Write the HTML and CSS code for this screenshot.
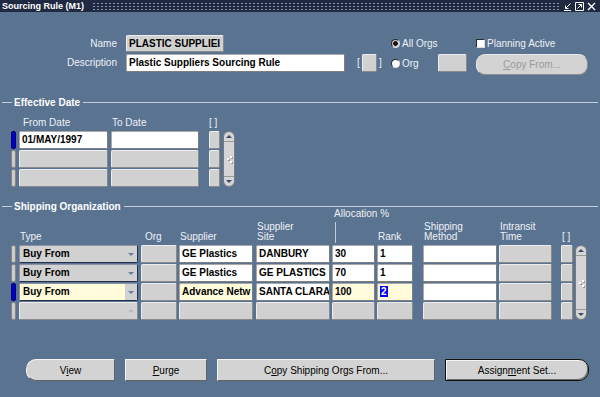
FILE: index.html
```html
<!DOCTYPE html>
<html>
<head>
    <title>Sourcing Rule (M1)</title>
    <link rel="stylesheet" href="styles.css">
</head>
<body>
<div class="window">
    <div class="titlebar">
        <span class="title">Sourcing Rule (M1)</span>
        <span class="dots"></span>
        <span class="wbtns">
            <svg width="9" height="9" viewBox="0 0 9 9"><path d="M7.5 1.5 L2.5 6.5 M2.5 3.5 V6.5 H5.5 M1 8.5 H8" stroke="#fff" fill="none"/></svg>
            <svg width="9" height="9" viewBox="0 0 9 9"><path d="M0.5 0.5 H8.5 V8.5 H0.5 Z M2.5 6.5 L6.5 2.5 M3.5 2.5 H6.5 V5.5" stroke="#fff" fill="none"/></svg>
            <svg width="9" height="9" viewBox="0 0 9 9"><path d="M1 1 L8 8 M8 1 L1 8" stroke="#fff" stroke-width="1.4"/></svg>
        </span>
    </div>

    <div class="content">
        <!-- header fields -->
        <div class="hdr">
            <div class="hrow">
                <span class="lbl">Name</span>
                <div class="fld grey w-name">PLASTIC SUPPLIEI</div>
                <span class="radio on all-orgs"><i></i>All Orgs</span>
                <span class="check"><i></i>Planning Active</span>
            </div>
            <div class="hrow">
                <span class="lbl">Description</span>
                <div class="fld w-desc">Plastic Suppliers Sourcing Rule</div>
                <span class="brk first">[</span>
                <div class="fld grey w-dff"></div>
                <span class="brk">]</span>
                <span class="radio org"><i></i>Org</span>
                <div class="fld grey w-orgcode"></div>
                <div class="btn copy-from"><span><u>C</u>opy From...</span></div>
            </div>
        </div>

        <!-- effective date -->
        <div class="section sec-eff"><span>Effective Date</span></div>
        <div class="eff-head">
            <span class="c-from">From Date</span>
            <span class="c-to">To Date</span>
            <span class="c-dff">[ ]</span>
        </div>
        <div class="grid eff">
            <div class="rows">
                <div class="row">
                    <i class="ind cur"></i>
                    <div class="fld e-from">01/MAY/1997</div>
                    <div class="fld e-to"></div>
                    <div class="fld grey e-dff"></div>
                </div>
                <div class="row">
                    <i class="ind"></i>
                    <div class="fld grey e-from"></div>
                    <div class="fld grey e-to"></div>
                    <div class="fld grey e-dff"></div>
                </div>
                <div class="row">
                    <i class="ind"></i>
                    <div class="fld grey e-from"></div>
                    <div class="fld grey e-to"></div>
                    <div class="fld grey e-dff"></div>
                </div>
            </div>
            <div class="sb sb-eff">
                <div class="up"></div>
                <div class="trk"><span class="grip"></span></div>
                <div class="dn"></div>
            </div>
        </div>

        <!-- shipping organization -->
        <div class="section sec-ship"><span>Shipping Organization</span></div>
        <div class="ship-head">
            <span class="h-ind"></span>
            <span class="s-type">Type</span>
            <span class="s-org h-org">Org</span>
            <span class="s-sup">Supplier</span>
            <span class="s-site">Supplier<br>Site</span>
            <div class="h-alloc">
                <span class="top">Allocation %</span>
                <div class="bot">
                    <span class="vline"></span>
                    <span class="rank">Rank</span>
                </div>
            </div>
            <span class="s-ship">Shipping<br>Method</span>
            <span class="s-intr">Intransit<br>Time</span>
            <span class="s-dff">[ ]</span>
        </div>
        <div class="grid ship">
            <div class="rows">
                <div class="row">
                    <i class="ind"></i>
                    <div class="fld combo s-type"><span class="v">Buy From</span><span class="dd"></span></div>
                    <div class="fld grey s-org"></div>
                    <div class="fld s-sup">GE Plastics</div>
                    <div class="fld s-site">DANBURY</div>
                    <div class="fld s-alloc">30</div>
                    <div class="fld s-rank">1</div>
                    <div class="fld s-ship"></div>
                    <div class="fld grey s-intr"></div>
                    <div class="fld grey s-dff"></div>
                </div>
                <div class="row">
                    <i class="ind"></i>
                    <div class="fld combo s-type"><span class="v">Buy From</span><span class="dd"></span></div>
                    <div class="fld grey s-org"></div>
                    <div class="fld s-sup">GE Plastics</div>
                    <div class="fld s-site">GE PLASTICS</div>
                    <div class="fld s-alloc">70</div>
                    <div class="fld s-rank">1</div>
                    <div class="fld s-ship"></div>
                    <div class="fld grey s-intr"></div>
                    <div class="fld grey s-dff"></div>
                </div>
                <div class="row">
                    <i class="ind cur"></i>
                    <div class="fld combo yel s-type"><span class="v">Buy From</span><span class="dd"></span></div>
                    <div class="fld grey s-org"></div>
                    <div class="fld yel s-sup">Advance Netw</div>
                    <div class="fld s-site">SANTA CLARA</div>
                    <div class="fld yel s-alloc">100</div>
                    <div class="fld yel s-rank"><span class="sel">2</span></div>
                    <div class="fld s-ship"></div>
                    <div class="fld grey s-intr"></div>
                    <div class="fld grey s-dff"></div>
                </div>
                <div class="row">
                    <i class="ind"></i>
                    <div class="fld combo empty s-type"><span class="v"></span><span class="dd"></span></div>
                    <div class="fld grey s-org"></div>
                    <div class="fld grey s-sup"></div>
                    <div class="fld grey s-site"></div>
                    <div class="fld grey s-alloc"></div>
                    <div class="fld grey s-rank"></div>
                    <div class="fld grey s-ship"></div>
                    <div class="fld grey s-intr"></div>
                    <div class="fld grey s-dff"></div>
                </div>
            </div>
            <div class="sb sb-ship">
                <div class="up"></div>
                <div class="trk"><span class="grip"></span></div>
                <div class="dn"></div>
            </div>
        </div>

        <!-- buttons -->
        <div class="btns">
            <div class="btn b-view">V<u>i</u>ew</div>
            <div class="btn b-purge"><u>P</u>urge</div>
            <div class="btn b-copy">C<u>o</u>py Shipping Orgs From...</div>
            <div class="btn b-assign">Assign<u>m</u>ent Set...</div>
        </div>
    </div>
</div>
</body>
</html>
```

FILE: styles.css
```css
* { box-sizing: border-box; }
body { margin: 0; font-family: "Liberation Sans", Arial, sans-serif; font-size: 10px; background: #5a7391; }
.window { width: 600px; height: 397px; background: #5a7391; overflow: hidden; }

/* title bar */
.titlebar { display: flex; align-items: center; height: 12px; background: #1f2941; color: #fff; padding: 0 4px 0 2px; }
.title { font-weight: bold; font-size: 9px; white-space: nowrap; }
.dots { flex: 1; height: 8px; margin: 0 4px 0 8px; background-image: radial-gradient(circle, #8b95a9 0.8px, transparent 1.1px); background-size: 4px 3px; }
.wbtns { display: flex; gap: 3px; }
.wbtns svg { display: block; }

.content { padding-top: 23px; color: #eef1f5; }

/* generic field */
.fld { height: 18px; background: #fff; border: 1px solid; border-color: #a9a9a9 #7e7e7e #7e7e7e #a9a9a9; border-radius: 2px; font-weight: bold; color: #000; line-height: 16px; padding-left: 2px; white-space: nowrap; overflow: hidden; }
.fld.grey { background: #d1d1d1; border-color: #ececec #8a8a8a #8a8a8a #ececec; }
.fld.yel { background: #fffbdb; }
.sel { background: #0000ff; color: #fff; padding: 0 1px; }

/* header */
.hrow { display: flex; align-items: flex-start; }
.hrow + .hrow { margin-top: 1px; }
.lbl { width: 118px; text-align: right; padding-right: 1px; line-height: 18px; }
.w-name { margin-left: 8px; width: 98px; height: 17px; line-height: 15px; }
.w-desc { margin-left: 8px; width: 219px; }
.brk { width: 7px; line-height: 18px; text-align: center; }
.brk.first { margin-left: 10px; }
.w-dff { width: 15px; }
.w-orgcode { width: 29px; }

.radio { display: flex; align-items: center; height: 17px; }
.radio i { width: 9px; height: 9px; border-radius: 50%; background: #fff; border: 1px solid #3a3a3a; border-color: #2a2a2a #e0e0e0 #e0e0e0 #2a2a2a; margin-right: 2px; }
.radio.on i { background: radial-gradient(circle, #111 0 2px, #c9c9c9 2.6px); }
.all-orgs { margin-left: 167px; width: 85px; }
.org { margin-left: 7px; width: 47px; height: 18px; }
.check { display: flex; align-items: center; height: 17px; }
.check i { width: 9px; height: 9px; background: #fff; border: 1px solid; border-color: #2a2a2a #dcdcdc #dcdcdc #2a2a2a; margin-right: 2px; }

/* buttons */
.btn { height: 22px; display: flex; align-items: center; justify-content: center; background: #d3d3d3; border: 1px solid; border-color: #f4f4f4 #626262 #626262 #f4f4f4; color: #000; }
.copy-from { margin-left: 9px; width: 112px; height: 21px; border-radius: 9px; color: #9a9a9a; border-color: #e8e8e8 #8e8e8e #8e8e8e #e8e8e8; }
.btns { display: flex; margin-top: 39px; padding-left: 26px; }
.b-view { width: 89px; border-radius: 10px 0 0 10px; }
.b-purge { margin-left: 10px; width: 82px; }
.b-copy { margin-left: 10px; width: 218px; }
.b-assign { margin-left: 10px; width: 144px; border: 1px solid #101010; border-radius: 0 10px 10px 0; box-shadow: inset 1px 1px #f4f4f4, inset -1px -1px #6a6a6a; }

/* section headings */
.section { display: flex; align-items: center; height: 12px; font-weight: bold; color: #fff; }
.section::before { content: ""; width: 10px; margin: 0 2px 0 2px; border-top: 1px solid #c4ccd8; }
.section::after { content: ""; flex: 1; margin: 0 2px 0 3px; border-top: 1px solid #c4ccd8; }
.sec-eff { margin-top: 21px; }
.sec-ship { margin-top: 13px; }

/* multi-row blocks */
.grid { display: flex; padding-left: 11px; }
.rows { display: flex; flex-direction: column; gap: 1px; }
.row { display: flex; }
.ind { display: block; width: 5px; height: 18px; background: #cbcbcb; border: 1px solid #858585; border-radius: 2px; }
.ind.cur { background: #0000cc; border-color: #00006e; }

.eff-head { display: flex; height: 12px; margin-top: 9px; padding-left: 23px; line-height: 12px; }
.c-from { width: 89px; }
.c-to { width: 97px; }
.eff { margin-top: 2px; }
.e-from { margin-left: 3px; width: 89px; }
.e-to { margin-left: 3px; width: 88px; }
.e-dff { margin-left: 10px; width: 11px; }
.sb-eff { margin-left: 3px; }

.ship-head { display: flex; align-items: flex-end; height: 32px; padding: 0 0 2px 11px; line-height: 10px; }
.ship-head > span { padding-left: 1px; }
.h-ind { width: 5px; }
.ship-head .h-org { padding-left: 4px; }
.h-alloc { margin-left: 2px; width: 81px; align-self: stretch; margin-top: -3px; margin-bottom: -1px; display: flex; flex-direction: column; }
.h-alloc .top { padding-left: 2px; line-height: 10px; }
.h-alloc .bot { flex: 1; display: flex; align-items: flex-end; padding-top: 3px; }
.vline { margin-left: 3px; width: 1px; align-self: stretch; background: #c4ccd8; }
.rank { margin-left: 42px; margin-bottom: 1px; }
.ship { margin-top: 1px; }

.s-type { margin-left: 3px; width: 119px; }
.s-org { margin-left: 3px; width: 36px; }
.s-sup { margin-left: 2px; width: 74px; }
.s-site { margin-left: 3px; width: 74px; }
.s-alloc { margin-left: 2px; width: 43px; }
.s-rank { margin-left: 2px; width: 36px; }
.s-ship { margin-left: 10px; width: 74px; }
.s-intr { margin-left: 2px; width: 53px; }
.s-dff { margin-left: 9px; width: 12px; }
.sb-ship { margin-left: 2px; }

.combo { display: flex; padding: 0; background: #d1d1d1; border-color: #8a93a6 #26304a #26304a #8a93a6; }
.combo .v { flex: 1; padding-left: 3px; }
.combo.yel .v { background: #fffbdb; }
.combo .dd { width: 12px; display: flex; align-items: center; justify-content: center; background: #d1d1d1; }
.combo .dd::before { content: ""; border-left: 3px solid transparent; border-right: 3px solid transparent; border-top: 3px solid #6c7a94; }
.combo.empty { border-color: #ececec #8a8a8a #8a8a8a #ececec; }
.combo.empty .dd::before { border-top-color: #b4bac6; }

/* scrollbars */
.sb { width: 12px; border-radius: 6px; background: #d5d5d5; border: 1px solid #7a7a7a; display: flex; flex-direction: column; overflow: hidden; }
.sb .up, .sb .dn { height: 10px; display: flex; align-items: center; justify-content: center; }
.sb .up { border-bottom: 1px solid #9a9a9a; }
.sb .dn { border-top: 1px solid #9a9a9a; }
.sb .up::before { content: ""; border-left: 3px solid transparent; border-right: 3px solid transparent; border-bottom: 3px solid #3b4a6c; }
.sb .dn::before { content: ""; border-left: 3px solid transparent; border-right: 3px solid transparent; border-top: 3px solid #3b4a6c; }
.sb .trk { flex: 1; display: flex; align-items: center; justify-content: center; }
.grip { width: 2px; height: 2px; background: #fff; box-shadow: 3px -2px 0 #fff, 3px 3px 0 #fff, 1px 1px 0 #9a9a9a, 4px -1px 0 #9a9a9a, 4px 4px 0 #9a9a9a; margin-left: -3px; }
```
